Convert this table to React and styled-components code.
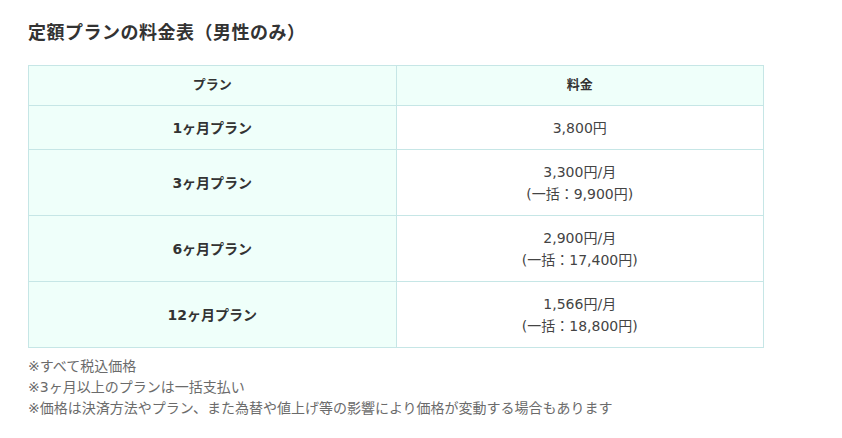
import styled, { createGlobalStyle } from 'styled-components';

const GlobalStyle = createGlobalStyle`
  body {
    margin: 0;
    background: #fff;
    font-family: "DejaVu Sans", "Noto Sans CJK JP", sans-serif;
    color: #333;
  }
`;

const plans = [
  { name: '1ヶ月プラン', price: '3,800円' },
  { name: '3ヶ月プラン', price: '3,300円/月', total: '(一括：9,900円)' },
  { name: '6ヶ月プラン', price: '2,900円/月', total: '(一括：17,400円)' },
  { name: '12ヶ月プラン', price: '1,566円/月', total: '(一括：18,800円)' },
];

const notes = [
  '※すべて税込価格',
  '※3ヶ月以上のプランは一括支払い',
  '※価格は決済方法やプラン、また為替や値上げ等の影響により価格が変動する場合もあります',
];

function App() {
  return (
    <>
      <GlobalStyle />
      <Section>
        <Title>定額プランの料金表（男性のみ）</Title>
        <Table>
          <thead>
            <tr>
              <HeadCell>プラン</HeadCell>
              <HeadCell>料金</HeadCell>
            </tr>
          </thead>
          <tbody>
            {plans.map((p) => (
              <tr key={p.name}>
                <PlanCell>{p.name}</PlanCell>
                <PriceCell>
                  {p.price}
                  {p.total && (
                    <>
                      <br />
                      {p.total}
                    </>
                  )}
                </PriceCell>
              </tr>
            ))}
          </tbody>
        </Table>
        <Notes>
          {notes.map((n) => (
            <Note key={n}>{n}</Note>
          ))}
        </Notes>
      </Section>
    </>
  );
}

const Section = styled.section`
  padding: 17px 28px 0;
`;

const Title = styled.h2`
  margin: 0 0 20px;
  font-family: "Noto Sans CJK JP", sans-serif;
  font-size: 18px;
  font-weight: 700;
  letter-spacing: 0.5px;
  line-height: 28px;
  color: #333;
`;

const Table = styled.table`
  width: 736px;
  border-collapse: collapse;
  table-layout: fixed;
  font-size: 14px;
  line-height: 22px;
  td,
  th {
    border: 1px solid #c6e6e6;
    text-align: center;
    vertical-align: middle;
  }
`;

const HeadCell = styled.th`
  background: #effffa;
  padding: 8px 10px 9px;
  font-weight: 700;
  font-size: 13px;
  color: #333;
`;

const PlanCell = styled.td`
  background: #effffa;
  padding: 10.5px 10px;
  font-weight: 700;
  color: #333;
`;

const PriceCell = styled.td`
  background: #fff;
  padding: 10.5px 10px;
  color: #444;
`;

const Notes = styled.div`
  margin-top: 8px;
  font-size: 14px;
  line-height: 21px;
  color: #6b6b6b;
`;

const Note = styled.p`
  margin: 0;
`;

export default App;
